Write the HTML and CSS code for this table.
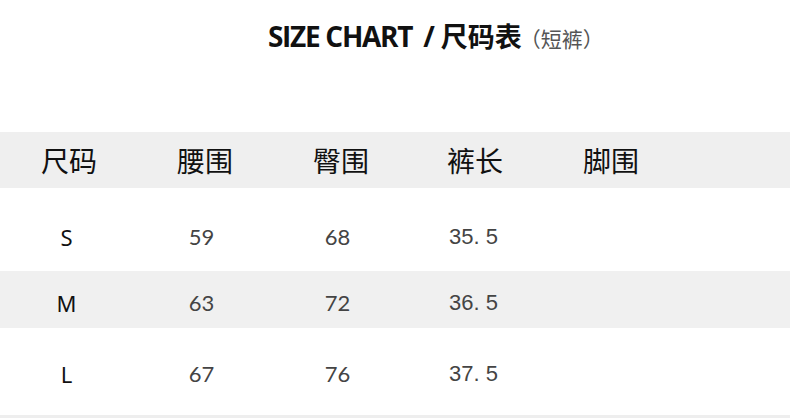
FILE: index.html
```html
<!DOCTYPE html>
<html lang="zh">
<head>
<meta charset="utf-8">
<link rel="stylesheet" href="styles.css">
</head>
<body>
<div class="page">
  <h1 class="title"><span class="en">SIZE CHART</span><span class="slash">/</span><span class="zh">尺码表</span><span class="sub">（短裤）</span></h1>
  <div class="table">
    <div class="row head">
      <div class="cell c1">尺码</div>
      <div class="cell c2">腰围</div>
      <div class="cell c3">臀围</div>
      <div class="cell c4">裤长</div>
      <div class="cell c5">脚围</div>
    </div>
    <div class="row data r-s">
      <div class="cell c1 size">S</div>
      <div class="cell c2">59</div>
      <div class="cell c3">68</div>
      <div class="cell c4">35. 5</div>
      <div class="cell c5"></div>
    </div>
    <div class="row data r-m alt">
      <div class="cell c1 size">M</div>
      <div class="cell c2">63</div>
      <div class="cell c3">72</div>
      <div class="cell c4">36. 5</div>
      <div class="cell c5"></div>
    </div>
    <div class="row data r-l">
      <div class="cell c1 size">L</div>
      <div class="cell c2">67</div>
      <div class="cell c3">76</div>
      <div class="cell c4">37. 5</div>
      <div class="cell c5"></div>
    </div>
    <div class="row foot"></div>
  </div>
</div>
</body>
</html>
```
FILE: styles.css
```css
* { box-sizing: border-box; margin: 0; padding: 0; }
html, body { background: #fff; }
body { width: 790px; height: 418px; overflow: hidden; font-family: "Noto Sans CJK SC", "Noto Sans", sans-serif; }
.page { display: flex; flex-direction: column; }
.title {
  height: 132px;
  padding-top: 16px;
  padding-left: 268px;
  display: flex;
  align-items: baseline;
  font-weight: 700;
  color: #111;
}
.title .en {
  font-family: "Open Sans", sans-serif;
  font-size: 28px;
  font-stretch: 88%;
  letter-spacing: -1.3px;
  line-height: 40px;
}
.title .slash {
  font-family: "Open Sans", sans-serif;
  font-size: 28px;
  margin: 0 6px 0 11px;
}
.title .zh {
  font-family: "Noto Sans CJK SC", sans-serif;
  font-size: 27px;
}
.title .sub {
  font-family: "Noto Sans CJK SC", sans-serif;
  font-size: 21px;
  font-weight: 400;
  color: #555;
  margin-left: -2px;
}
.table { display: flex; flex-direction: column; }
.row {
  display: grid;
  grid-template-columns: 136px 136px 136px 136px 1fr;
  align-items: center;
  padding-left: 1px;
}
.head { height: 56px; background: #efefef; font-size: 28px; color: #111; }
.head .cell { text-align: center; }
.head .c4 { text-align: left; padding-left: 38px; }
.head .c5 { text-align: left; padding-left: 38px; }
.data { font-size: 22px; color: #444; }
.data .cell { text-align: center; }
.data .c2, .data .c3 { padding-right: 7px; }
.data .c4 { text-align: left; padding-left: 40px; font-family: "Liberation Sans", sans-serif; font-size: 22px; }
.size { color: #111; font-family: "Noto Sans", sans-serif; padding-right: 5px; }
.data .c2, .data .c3 { font-family: "Lato", sans-serif; }
.r-s { height: 83px; padding-top: 14px; }
.r-m { height: 57px; padding-top: 6px; }
.r-l { height: 87px; padding-top: 4px; }
.alt { background: #f0f0f0; }
.foot { height: 3px; background: #eeeeee; }
```
